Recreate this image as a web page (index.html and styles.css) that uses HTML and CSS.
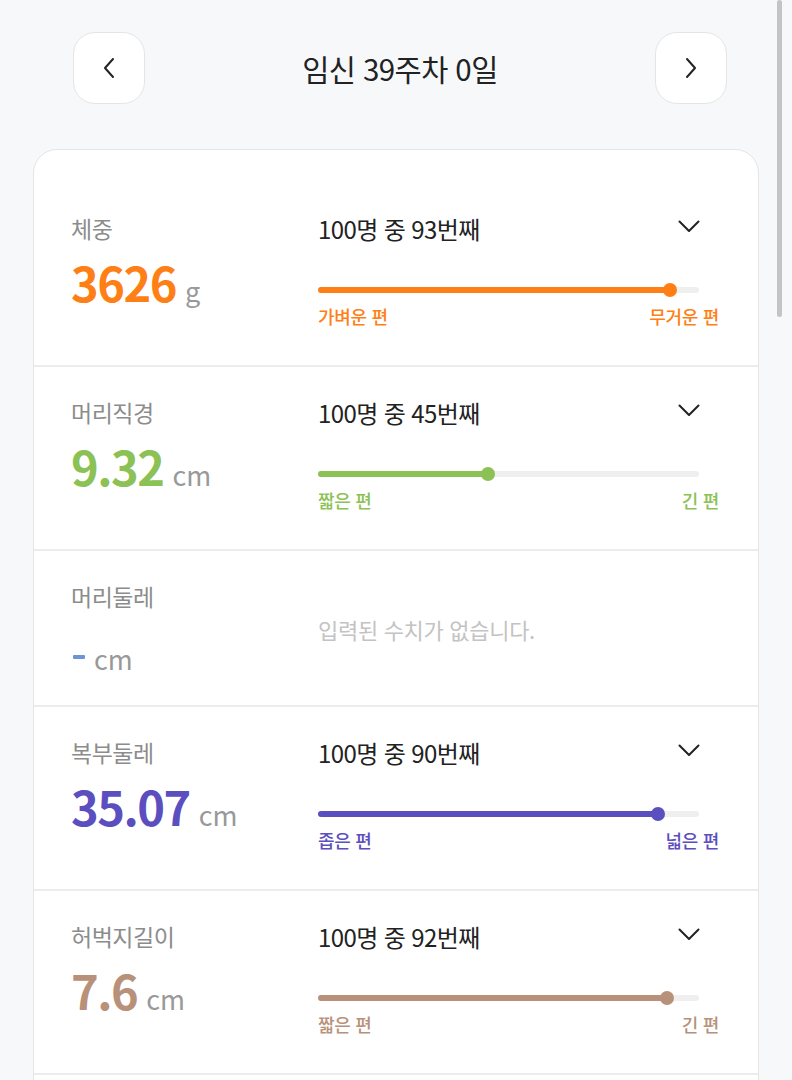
FILE: index.html
```html
<!DOCTYPE html>
<html lang="ko">
<head>
<meta charset="utf-8">
<title>임신 39주차 0일</title>
<link rel="stylesheet" href="styles.css">
</head>
<body>
<div class="page">
  <header class="nav">
    <button class="nav-btn" aria-label="이전">
      <svg width="14" height="22" viewBox="0 0 14 22"><path d="M11 2 L3 11 L11 20" fill="none" stroke="#222" stroke-width="2" stroke-linecap="round" stroke-linejoin="round"/></svg>
    </button>
    <h1 class="nav-title">임신 39주차 0일</h1>
    <button class="nav-btn" aria-label="다음">
      <svg width="14" height="22" viewBox="0 0 14 22"><path d="M3 2 L11 11 L3 20" fill="none" stroke="#222" stroke-width="2" stroke-linecap="round" stroke-linejoin="round"/></svg>
    </button>
  </header>

  <section class="card">
    <div class="row">
      <div class="left">
        <div class="label">체중</div>
        <div class="value"><span class="num c-orange">3626</span><span class="unit">g</span></div>
      </div>
      <div class="right">
        <div class="rank-line"><span class="rank">100명 중 93번째</span><svg class="chev" width="22" height="13" viewBox="0 0 22 13"><path d="M1.5 1.5 L11 11 L20.5 1.5" fill="none" stroke="#222" stroke-width="2" stroke-linecap="round" stroke-linejoin="round"/></svg></div>
        <div class="track"><div class="fill bg-orange" style="width:92.4%"><span class="thumb bg-orange"></span></div></div>
        <div class="ends c-orange"><span>가벼운 편</span><span>무거운 편</span></div>
      </div>
    </div>

    <div class="row">
      <div class="left">
        <div class="label">머리직경</div>
        <div class="value"><span class="num c-green">9.32</span><span class="unit">cm</span></div>
      </div>
      <div class="right">
        <div class="rank-line"><span class="rank">100명 중 45번째</span><svg class="chev" width="22" height="13" viewBox="0 0 22 13"><path d="M1.5 1.5 L11 11 L20.5 1.5" fill="none" stroke="#222" stroke-width="2" stroke-linecap="round" stroke-linejoin="round"/></svg></div>
        <div class="track"><div class="fill bg-green" style="width:44.6%"><span class="thumb bg-green"></span></div></div>
        <div class="ends c-green"><span>짧은 편</span><span>긴 편</span></div>
      </div>
    </div>

    <div class="row">
      <div class="left">
        <div class="label">머리둘레</div>
        <div class="value"><span class="num"><span class="dash"></span></span><span class="unit">cm</span></div>
      </div>
      <div class="right empty">
        <span class="empty-msg">입력된 수치가 없습니다.</span>
      </div>
    </div>

    <div class="row">
      <div class="left">
        <div class="label">복부둘레</div>
        <div class="value"><span class="num c-purple">35.07</span><span class="unit">cm</span></div>
      </div>
      <div class="right">
        <div class="rank-line"><span class="rank">100명 중 90번째</span><svg class="chev" width="22" height="13" viewBox="0 0 22 13"><path d="M1.5 1.5 L11 11 L20.5 1.5" fill="none" stroke="#222" stroke-width="2" stroke-linecap="round" stroke-linejoin="round"/></svg></div>
        <div class="track"><div class="fill bg-purple" style="width:89.2%"><span class="thumb bg-purple"></span></div></div>
        <div class="ends c-purple"><span>좁은 편</span><span>넓은 편</span></div>
      </div>
    </div>

    <div class="row">
      <div class="left">
        <div class="label">허벅지길이</div>
        <div class="value"><span class="num c-brown">7.6</span><span class="unit">cm</span></div>
      </div>
      <div class="right">
        <div class="rank-line"><span class="rank">100명 중 92번째</span><svg class="chev" width="22" height="13" viewBox="0 0 22 13"><path d="M1.5 1.5 L11 11 L20.5 1.5" fill="none" stroke="#222" stroke-width="2" stroke-linecap="round" stroke-linejoin="round"/></svg></div>
        <div class="track"><div class="fill bg-brown" style="width:91.6%"><span class="thumb bg-brown"></span></div></div>
        <div class="ends c-brown"><span>짧은 편</span><span>긴 편</span></div>
      </div>
    </div>

    <div class="row row-more"></div>
  </section>
</div>
<div class="scrollbar"></div>
</body>
</html>
```

FILE: styles.css
```css
html, body {
  margin: 0;
  padding: 0;
}
body {
  background: #f7f8fa;
  font-family: "Noto Sans CJK KR", "Noto Sans", sans-serif;
  color: #222;
  height: 1080px;
  overflow: hidden;
  position: relative;
}
.page {
  padding: 32px 33px 0 33px;
}
.nav {
  display: flex;
  align-items: center;
  justify-content: space-between;
  padding: 0 32px 0 40px;
  height: 72px;
}
.nav-btn {
  width: 72px;
  height: 72px;
  border-radius: 22px;
  border: 1.5px solid #e4e5e7;
  background: #fff;
  display: flex;
  align-items: center;
  justify-content: center;
  padding: 0;
}
.nav-title {
  margin: 0;
  font-size: 29.5px;
  font-weight: 400;
  letter-spacing: -0.6px;
  color: #222;
  line-height: 40px;
}
.card {
  margin-top: 45px;
  background: #fff;
  border: 1.5px solid #e4e5e7;
  border-radius: 24px;
  padding-top: 33px;
}
.row {
  display: grid;
  grid-template-columns: 247px 1fr;
  padding: 29px 39px 29px 37px;
  border-bottom: 2px solid #ececec;
}
.row-more {
  height: 120px;
  border-bottom: none;
}
.label {
  font-size: 23px;
  line-height: 32px;
  color: #8c8c8c;
  letter-spacing: -0.5px;
}
.value {
  margin-top: 10px;
  height: 54px;
  display: flex;
  align-items: baseline;
  line-height: 56px;
}
.num {
  font-size: 47px;
  font-weight: 700;
  letter-spacing: -1.5px;
}
.unit {
  font-size: 27px;
  color: #999;
  margin-left: 9px;
}
.dash {
  display: inline-block;
  width: 12px;
  height: 4px;
  background: #6b95d6;
  border-radius: 1px;
  margin: 0 0 0 2px;
  vertical-align: middle;
}
.right {
  display: flex;
  flex-direction: column;
  padding-bottom: 8px;
}
.right.empty {
  justify-content: center;
  padding-bottom: 0;
}
.empty-msg {
  font-size: 22px;
  color: #c3c3c3;
  letter-spacing: -0.3px;
  position: relative;
  top: 1px;
}
.rank-line {
  display: flex;
  align-items: center;
  justify-content: space-between;
  height: 32px;
  padding-right: 19px;
}
.rank {
  font-size: 24px;
  letter-spacing: -0.6px;
  color: #222;
}
.chev {
  display: block;
  margin-top: -4px;
}
.track {
  margin-top: 43px;
  margin-right: 20px;
  height: 6px;
  background: #efefef;
  border-radius: 3px;
}
.fill {
  position: relative;
  height: 6px;
  border-radius: 3px;
}
.thumb {
  position: absolute;
  right: -7px;
  top: -4px;
  width: 14px;
  height: 14px;
  border-radius: 50%;
}
.ends {
  margin-top: 11px;
  display: flex;
  justify-content: space-between;
  font-size: 18px;
  line-height: 24px;
  font-weight: 500;
  letter-spacing: -0.3px;
}
.c-orange { color: #ff7f17; }
.c-green { color: #8cc155; }
.c-purple { color: #5b4fc0; }
.c-brown { color: #b8917a; }
.bg-orange { background: #ff7f17; }
.bg-green { background: #8cc155; }
.bg-purple { background: #5b4fc0; }
.bg-brown { background: #b8917a; }
.scrollbar {
  position: absolute;
  top: 0;
  left: 777px;
  width: 5px;
  height: 317px;
  background: #c4c4c4;
  border-radius: 3px;
}
```
